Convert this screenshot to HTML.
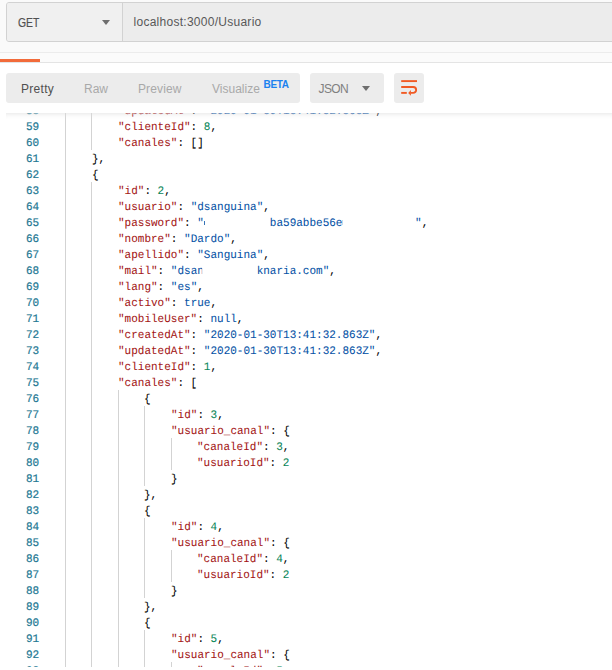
<!DOCTYPE html>
<html><head><meta charset="utf-8"><title>Postman</title>
<style>
html,body{margin:0;padding:0;}
body{width:612px;height:670px;overflow:hidden;background:#fff;position:relative;font-family:"Liberation Sans",sans-serif;font-size:12px;color:#505050;}
#topbg{position:absolute;left:0;top:0;width:612px;height:52px;background:#fafafa;border-bottom:1px solid #ececec;}
#midbg{position:absolute;left:0;top:53px;width:612px;height:9px;background:#fbfbfb;border-bottom:1px solid #e4e4e4;}
#tabind{position:absolute;left:0;top:59px;width:40px;height:3px;background:#f26b3a;}
#req{position:absolute;left:6px;top:2px;width:620px;height:38px;border:1px solid #d2d2d2;border-radius:3px;background:#ececec;}
#method{position:absolute;left:0;top:0;width:115px;height:38px;background:#f0f0f0;border-right:1px solid #d2d2d2;border-radius:2px 0 0 2px;}
#method span{position:absolute;left:10.9px;top:2px;line-height:37px;font-size:12.5px;color:#505050;-webkit-text-stroke:0.2px;transform:scaleX(0.83);transform-origin:0 50%;}
.arr{position:absolute;width:0;height:0;border-left:4px solid transparent;border-right:4px solid transparent;border-top:5px solid #6e6e6e;}
#url{position:absolute;left:126.5px;top:1.4px;line-height:37px;font-size:12px;color:#585858;letter-spacing:0.27px;white-space:nowrap;}
#tabs{position:absolute;left:6px;top:73px;width:294px;height:29.5px;background:#ececec;border-radius:3px;}
#tabs span{position:absolute;top:1px;line-height:31px;white-space:nowrap;}
.dim{color:#a9a9a9;}
#beta{font-size:10px;letter-spacing:-0.3px;font-weight:bold;color:#1b82f0;}
#json{position:absolute;left:310px;top:73px;width:74px;height:29.5px;background:#ececec;border-radius:3px;}
#json span{position:absolute;left:8.5px;top:1px;line-height:31px;color:#808080;letter-spacing:-0.6px;}
#wrap{position:absolute;left:394px;top:73px;width:30px;height:29.5px;background:#ececec;border-radius:3px;}
#ed{position:absolute;left:6px;top:113px;width:606px;height:554px;overflow:hidden;background:#fff;}
#ed .shadow{position:absolute;left:0;top:0;width:100%;height:6px;box-shadow:#dddddd 0 6px 6px -6px inset;z-index:5;}
.ln{position:absolute;left:0;width:33.20px;height:16px;line-height:16px;text-align:right;color:#237893;font-family:"Liberation Mono",monospace;font-size:11.5px;transform:scaleX(0.9565);transform-origin:100% 50%;white-space:pre;-webkit-text-stroke:0.2px;text-rendering:geometricPrecision;}
.cl{position:absolute;height:16px;line-height:16px;font-family:"Liberation Mono",monospace;font-size:11.5px;transform:scaleX(0.9565);transform-origin:0 50%;white-space:pre;color:#000;-webkit-text-stroke:0.05px;text-rendering:geometricPrecision;}
.g{position:absolute;width:1px;height:16px;background:#d3d3d3;}
.mk{position:absolute;width:1px;background:#0451a5;}
.clip{display:inline-block;overflow:hidden;vertical-align:top;height:16px;}
</style></head><body>
<div id="topbg"></div><div id="midbg"></div><div id="tabind"></div>
<div id="req"><div id="method"><span>GET</span><i class="arr" style="left:95px;top:17.3px"></i></div><div id="url">localhost:3000/Usuario</div></div>
<div id="tabs"><span style="left:15px;color:#505050;letter-spacing:0.3px">Pretty</span><span class="dim" style="left:78px">Raw</span><span class="dim" style="left:132px;letter-spacing:0.12px">Preview</span><span class="dim" style="left:206px">Visualize</span><span id="beta" style="left:257.5px;top:-3.6px">BETA</span></div>
<div id="json"><span>JSON</span><i class="arr" style="left:52px;top:13px"></i></div>
<div id="wrap"><svg width="30" height="30" viewBox="0 0 30 30" style="position:absolute;left:0;top:0"><g fill="none" stroke="#f15a24" stroke-width="1.9"><path d="M7.2 8.1H23"/><path d="M7.2 14H19.2a2.95 2.95 0 0 1 0 5.9H16.5"/><path d="M7.2 19.9H12.8"/></g><path d="M14.2 19.9L16.9 17V22.8Z" fill="#f15a24"/></svg></div>
<div id="ed"><div class="shadow"></div>
<div class="ln" style="top:-9px">58</div>
<i class="g" style="left:59px;top:-11px"></i>
<i class="g" style="left:85px;top:-11px"></i>
<div class="cl" style="left:112.00px;top:-9px"><span style="color:#a31515">&quot;updatedAt&quot;</span><span style="color:#000000">: </span><span style="color:#0451a5">&quot;2020-01-30T13:41:32.863Z&quot;</span><span style="color:#000000">,</span></div>
<div class="ln" style="top:7px">59</div>
<i class="g" style="left:59px;top:5px"></i>
<i class="g" style="left:85px;top:5px"></i>
<div class="cl" style="left:112.00px;top:7px"><span style="color:#a31515">&quot;clienteId&quot;</span><span style="color:#000000">: </span><span style="color:#098658">8</span><span style="color:#000000">,</span></div>
<div class="ln" style="top:23px">60</div>
<i class="g" style="left:59px;top:21px"></i>
<i class="g" style="left:85px;top:21px"></i>
<div class="cl" style="left:112.00px;top:23px"><span style="color:#a31515">&quot;canales&quot;</span><span style="color:#000000">: []</span></div>
<div class="ln" style="top:39px">61</div>
<i class="g" style="left:59px;top:37px"></i>
<div class="cl" style="left:85.60px;top:39px"><span style="color:#000000">},</span></div>
<div class="ln" style="top:55px">62</div>
<i class="g" style="left:59px;top:53px"></i>
<div class="cl" style="left:85.60px;top:55px"><span style="color:#000000">{</span></div>
<div class="ln" style="top:71px">63</div>
<i class="g" style="left:59px;top:69px"></i>
<i class="g" style="left:85px;top:69px"></i>
<div class="cl" style="left:112.00px;top:71px"><span style="color:#a31515">&quot;id&quot;</span><span style="color:#000000">: </span><span style="color:#098658">2</span><span style="color:#000000">,</span></div>
<div class="ln" style="top:87px">64</div>
<i class="g" style="left:59px;top:85px"></i>
<i class="g" style="left:85px;top:85px"></i>
<div class="cl" style="left:112.00px;top:87px"><span style="color:#a31515">&quot;usuario&quot;</span><span style="color:#000000">: </span><span style="color:#0451a5">&quot;dsanguina&quot;</span><span style="color:#000000">,</span></div>
<div class="ln" style="top:103px">65</div>
<i class="g" style="left:59px;top:101px"></i>
<i class="g" style="left:85px;top:101px"></i>
<div class="cl" style="left:112.00px;top:103px"><span style="color:#a31515">&quot;password&quot;</span><span style="color:#000000">: </span><span style="color:#0451a5">&quot;<span class="clip" style="width:69.00px"></span>ba59abbe56e<span class="clip" style="width:75.90px"></span>&quot;</span><span style="color:#000000">,</span></div>
<div class="ln" style="top:119px">66</div>
<i class="g" style="left:59px;top:117px"></i>
<i class="g" style="left:85px;top:117px"></i>
<div class="cl" style="left:112.00px;top:119px"><span style="color:#a31515">&quot;nombre&quot;</span><span style="color:#000000">: </span><span style="color:#0451a5">&quot;Dardo&quot;</span><span style="color:#000000">,</span></div>
<div class="ln" style="top:135px">67</div>
<i class="g" style="left:59px;top:133px"></i>
<i class="g" style="left:85px;top:133px"></i>
<div class="cl" style="left:112.00px;top:135px"><span style="color:#a31515">&quot;apellido&quot;</span><span style="color:#000000">: </span><span style="color:#0451a5">&quot;Sanguina&quot;</span><span style="color:#000000">,</span></div>
<div class="ln" style="top:151px">68</div>
<i class="g" style="left:59px;top:149px"></i>
<i class="g" style="left:85px;top:149px"></i>
<div class="cl" style="left:112.00px;top:151px"><span style="color:#a31515">&quot;mail&quot;</span><span style="color:#000000">: </span><span style="color:#0451a5">&quot;dsa<span class="clip" style="width:5.0px">n</span><span class="clip" style="width:57.10px"></span>knaria.com&quot;</span><span style="color:#000000">,</span></div>
<div class="ln" style="top:167px">69</div>
<i class="g" style="left:59px;top:165px"></i>
<i class="g" style="left:85px;top:165px"></i>
<div class="cl" style="left:112.00px;top:167px"><span style="color:#a31515">&quot;lang&quot;</span><span style="color:#000000">: </span><span style="color:#0451a5">&quot;es&quot;</span><span style="color:#000000">,</span></div>
<div class="ln" style="top:183px">70</div>
<i class="g" style="left:59px;top:181px"></i>
<i class="g" style="left:85px;top:181px"></i>
<div class="cl" style="left:112.00px;top:183px"><span style="color:#a31515">&quot;activo&quot;</span><span style="color:#000000">: </span><span style="color:#0451a5">true</span><span style="color:#000000">,</span></div>
<div class="ln" style="top:199px">71</div>
<i class="g" style="left:59px;top:197px"></i>
<i class="g" style="left:85px;top:197px"></i>
<div class="cl" style="left:112.00px;top:199px"><span style="color:#a31515">&quot;mobileUser&quot;</span><span style="color:#000000">: </span><span style="color:#0451a5">null</span><span style="color:#000000">,</span></div>
<div class="ln" style="top:215px">72</div>
<i class="g" style="left:59px;top:213px"></i>
<i class="g" style="left:85px;top:213px"></i>
<div class="cl" style="left:112.00px;top:215px"><span style="color:#a31515">&quot;createdAt&quot;</span><span style="color:#000000">: </span><span style="color:#0451a5">&quot;2020-01-30T13:41:32.863Z&quot;</span><span style="color:#000000">,</span></div>
<div class="ln" style="top:231px">73</div>
<i class="g" style="left:59px;top:229px"></i>
<i class="g" style="left:85px;top:229px"></i>
<div class="cl" style="left:112.00px;top:231px"><span style="color:#a31515">&quot;updatedAt&quot;</span><span style="color:#000000">: </span><span style="color:#0451a5">&quot;2020-01-30T13:41:32.863Z&quot;</span><span style="color:#000000">,</span></div>
<div class="ln" style="top:247px">74</div>
<i class="g" style="left:59px;top:245px"></i>
<i class="g" style="left:85px;top:245px"></i>
<div class="cl" style="left:112.00px;top:247px"><span style="color:#a31515">&quot;clienteId&quot;</span><span style="color:#000000">: </span><span style="color:#098658">1</span><span style="color:#000000">,</span></div>
<div class="ln" style="top:263px">75</div>
<i class="g" style="left:59px;top:261px"></i>
<i class="g" style="left:85px;top:261px"></i>
<div class="cl" style="left:112.00px;top:263px"><span style="color:#a31515">&quot;canales&quot;</span><span style="color:#000000">: [</span></div>
<div class="ln" style="top:279px">76</div>
<i class="g" style="left:59px;top:277px"></i>
<i class="g" style="left:85px;top:277px"></i>
<i class="g" style="left:112px;top:277px"></i>
<div class="cl" style="left:138.40px;top:279px"><span style="color:#000000">{</span></div>
<div class="ln" style="top:295px">77</div>
<i class="g" style="left:59px;top:293px"></i>
<i class="g" style="left:85px;top:293px"></i>
<i class="g" style="left:112px;top:293px"></i>
<i class="g" style="left:138px;top:293px"></i>
<div class="cl" style="left:164.80px;top:295px"><span style="color:#a31515">&quot;id&quot;</span><span style="color:#000000">: </span><span style="color:#098658">3</span><span style="color:#000000">,</span></div>
<div class="ln" style="top:311px">78</div>
<i class="g" style="left:59px;top:309px"></i>
<i class="g" style="left:85px;top:309px"></i>
<i class="g" style="left:112px;top:309px"></i>
<i class="g" style="left:138px;top:309px"></i>
<div class="cl" style="left:164.80px;top:311px"><span style="color:#a31515">&quot;usuario_canal&quot;</span><span style="color:#000000">: {</span></div>
<div class="ln" style="top:327px">79</div>
<i class="g" style="left:59px;top:325px"></i>
<i class="g" style="left:85px;top:325px"></i>
<i class="g" style="left:112px;top:325px"></i>
<i class="g" style="left:138px;top:325px"></i>
<i class="g" style="left:165px;top:325px"></i>
<div class="cl" style="left:191.20px;top:327px"><span style="color:#a31515">&quot;canaleId&quot;</span><span style="color:#000000">: </span><span style="color:#098658">3</span><span style="color:#000000">,</span></div>
<div class="ln" style="top:343px">80</div>
<i class="g" style="left:59px;top:341px"></i>
<i class="g" style="left:85px;top:341px"></i>
<i class="g" style="left:112px;top:341px"></i>
<i class="g" style="left:138px;top:341px"></i>
<i class="g" style="left:165px;top:341px"></i>
<div class="cl" style="left:191.20px;top:343px"><span style="color:#a31515">&quot;usuarioId&quot;</span><span style="color:#000000">: </span><span style="color:#098658">2</span></div>
<div class="ln" style="top:359px">81</div>
<i class="g" style="left:59px;top:357px"></i>
<i class="g" style="left:85px;top:357px"></i>
<i class="g" style="left:112px;top:357px"></i>
<i class="g" style="left:138px;top:357px"></i>
<div class="cl" style="left:164.80px;top:359px"><span style="color:#000000">}</span></div>
<div class="ln" style="top:375px">82</div>
<i class="g" style="left:59px;top:373px"></i>
<i class="g" style="left:85px;top:373px"></i>
<i class="g" style="left:112px;top:373px"></i>
<div class="cl" style="left:138.40px;top:375px"><span style="color:#000000">},</span></div>
<div class="ln" style="top:391px">83</div>
<i class="g" style="left:59px;top:389px"></i>
<i class="g" style="left:85px;top:389px"></i>
<i class="g" style="left:112px;top:389px"></i>
<div class="cl" style="left:138.40px;top:391px"><span style="color:#000000">{</span></div>
<div class="ln" style="top:407px">84</div>
<i class="g" style="left:59px;top:405px"></i>
<i class="g" style="left:85px;top:405px"></i>
<i class="g" style="left:112px;top:405px"></i>
<i class="g" style="left:138px;top:405px"></i>
<div class="cl" style="left:164.80px;top:407px"><span style="color:#a31515">&quot;id&quot;</span><span style="color:#000000">: </span><span style="color:#098658">4</span><span style="color:#000000">,</span></div>
<div class="ln" style="top:423px">85</div>
<i class="g" style="left:59px;top:421px"></i>
<i class="g" style="left:85px;top:421px"></i>
<i class="g" style="left:112px;top:421px"></i>
<i class="g" style="left:138px;top:421px"></i>
<div class="cl" style="left:164.80px;top:423px"><span style="color:#a31515">&quot;usuario_canal&quot;</span><span style="color:#000000">: {</span></div>
<div class="ln" style="top:439px">86</div>
<i class="g" style="left:59px;top:437px"></i>
<i class="g" style="left:85px;top:437px"></i>
<i class="g" style="left:112px;top:437px"></i>
<i class="g" style="left:138px;top:437px"></i>
<i class="g" style="left:165px;top:437px"></i>
<div class="cl" style="left:191.20px;top:439px"><span style="color:#a31515">&quot;canaleId&quot;</span><span style="color:#000000">: </span><span style="color:#098658">4</span><span style="color:#000000">,</span></div>
<div class="ln" style="top:455px">87</div>
<i class="g" style="left:59px;top:453px"></i>
<i class="g" style="left:85px;top:453px"></i>
<i class="g" style="left:112px;top:453px"></i>
<i class="g" style="left:138px;top:453px"></i>
<i class="g" style="left:165px;top:453px"></i>
<div class="cl" style="left:191.20px;top:455px"><span style="color:#a31515">&quot;usuarioId&quot;</span><span style="color:#000000">: </span><span style="color:#098658">2</span></div>
<div class="ln" style="top:471px">88</div>
<i class="g" style="left:59px;top:469px"></i>
<i class="g" style="left:85px;top:469px"></i>
<i class="g" style="left:112px;top:469px"></i>
<i class="g" style="left:138px;top:469px"></i>
<div class="cl" style="left:164.80px;top:471px"><span style="color:#000000">}</span></div>
<div class="ln" style="top:487px">89</div>
<i class="g" style="left:59px;top:485px"></i>
<i class="g" style="left:85px;top:485px"></i>
<i class="g" style="left:112px;top:485px"></i>
<div class="cl" style="left:138.40px;top:487px"><span style="color:#000000">},</span></div>
<div class="ln" style="top:503px">90</div>
<i class="g" style="left:59px;top:501px"></i>
<i class="g" style="left:85px;top:501px"></i>
<i class="g" style="left:112px;top:501px"></i>
<div class="cl" style="left:138.40px;top:503px"><span style="color:#000000">{</span></div>
<div class="ln" style="top:519px">91</div>
<i class="g" style="left:59px;top:517px"></i>
<i class="g" style="left:85px;top:517px"></i>
<i class="g" style="left:112px;top:517px"></i>
<i class="g" style="left:138px;top:517px"></i>
<div class="cl" style="left:164.80px;top:519px"><span style="color:#a31515">&quot;id&quot;</span><span style="color:#000000">: </span><span style="color:#098658">5</span><span style="color:#000000">,</span></div>
<div class="ln" style="top:535px">92</div>
<i class="g" style="left:59px;top:533px"></i>
<i class="g" style="left:85px;top:533px"></i>
<i class="g" style="left:112px;top:533px"></i>
<i class="g" style="left:138px;top:533px"></i>
<div class="cl" style="left:164.80px;top:535px"><span style="color:#a31515">&quot;usuario_canal&quot;</span><span style="color:#000000">: {</span></div>
<div class="ln" style="top:551px">93</div>
<i class="g" style="left:59px;top:549px"></i>
<i class="g" style="left:85px;top:549px"></i>
<i class="g" style="left:112px;top:549px"></i>
<i class="g" style="left:138px;top:549px"></i>
<i class="g" style="left:165px;top:549px"></i>
<div class="cl" style="left:191.20px;top:551px"><span style="color:#a31515">&quot;canaleId&quot;</span><span style="color:#000000">: </span><span style="color:#098658">5</span><span style="color:#000000">,</span></div>
<i class="mk" style="left:198px;top:108px;height:4px;opacity:.8"></i>
<i class="mk" style="left:336px;top:107px;height:5px;opacity:.22"></i>
</div>
</body></html>
